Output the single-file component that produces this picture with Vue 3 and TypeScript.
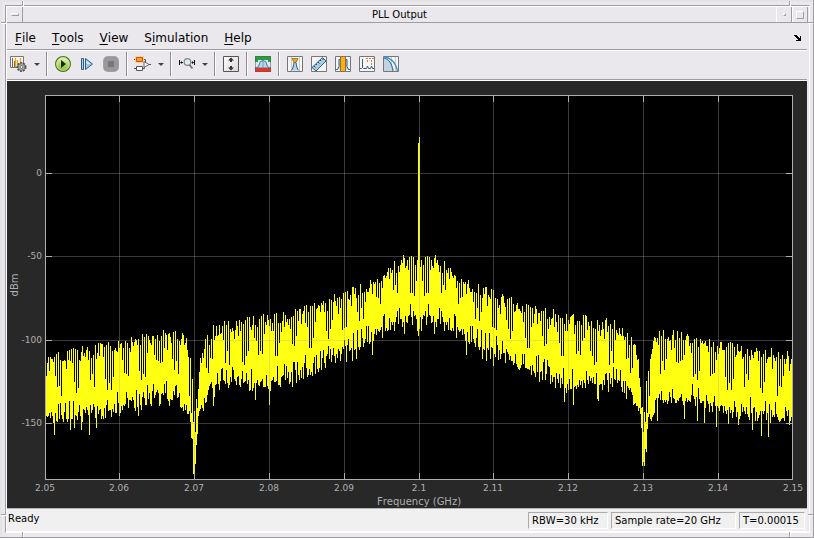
<script setup lang="ts">
interface MenuEntry { key: string; rest: string; lead?: string }
type Point = [number, number]

const menus: MenuEntry[] = [
  { key: 'F', rest: 'ile' },
  { key: 'T', rest: 'ools' },
  { key: 'V', rest: 'iew' },
  { lead: 'S', key: 'i', rest: 'mulation' },
  { key: 'H', rest: 'elp' },
]
const readouts = [
  { text: 'RBW=30 kHz', kind: 'rbw' },
  { text: 'Sample rate=20 GHz', kind: 'rate' },
  { text: 'T=0.00015', kind: 'time' },
]

// Axes rectangle inside the 800 x 427 scope canvas
const left = 38, top = 14, right = 785, bottom = 398
const xTicks = ['2.05', '2.06', '2.07', '2.08', '2.09', '2.1', '2.11', '2.12', '2.13', '2.14', '2.15']
  .map((label, i) => ({ label, x: left + Math.floor(i * 74.8) }))
const yTicks = [
  { label: '0', y: 92 }, { label: '-50', y: 175 }, { label: '-100', y: 259 }, { label: '-150', y: 342 },
]

// Envelopes as [distance from carrier, y]
const upper: Point[] = [[0, 175], [16, 173], [35, 187], [66, 205], [100, 219], [150, 231], [190, 237], [206, 243],
  [214, 257], [219, 273], [222, 308], [225, 328], [228, 282], [233, 256], [239, 247], [262, 249], [300, 259], [340, 265], [374, 270]]
const lower: Point[] = [[0, 238], [20, 241], [69, 269], [110, 289], [150, 304], [190, 303], [208, 306], [214, 319],
  [221, 336], [224, 384], [226, 374], [229, 337], [240, 318], [262, 318], [300, 328], [340, 335], [374, 338]]
const floor: Point[] = [[0, 214], [25, 219], [69, 248], [100, 268], [150, 283], [200, 287], [215, 300], [224, 356],
  [232, 325], [242, 295], [270, 300], [320, 312], [374, 320]]

function level(points: Point[], d: number): number {
  for (let i = 1; i < points.length; i++) {
    const [x0, y0] = points[i - 1]
    const [x1, y1] = points[i]
    if (d <= x1) return y0 + ((y1 - y0) * (d - x0)) / (x1 - x0)
  }
  return points[points.length - 1][1]
}
function noise(n: number): number {
  const v = Math.sin(n * 127.1 + 311.7) * 43758.5453
  return v - Math.floor(v)
}

// Nulls between spurs come in groups of alternating columns that repeat about every 17 columns
function nullDepth(d: number): number {
  const group = Math.floor((d + 1) / 16.8)
  const phase = Math.floor(d + 1 - group * 16.8)
  const r = noise(group * 20 + phase)
  if (phase === 6 || phase === 8 || phase === 10) return 0.6 + 0.4 * r
  if (phase === 4 || phase === 12) return 0.25 + 0.5 * r
  if (phase === 1 || phase === 14) return 0.5 * r
  return 0
}

function buildTrace(): string {
  let path = ''
  for (let x = left + 1; x < right; x++) {
    const d = Math.abs(x - 412)
    const n = d < 70 ? d : x
    const hi = level(upper, d)
    const inNotch = d > 212 && d < 236
    const reach = Math.max(level(floor, d) - hi, 4)
    const depth = nullDepth(d)
    let y0 = hi + noise(n + 500) * 14
    if (depth > 0) y0 = Math.max(y0, hi + reach * depth)
    let y1 = level(lower, d) - 7 + noise(n + 1300) * 14
    if (noise(n + 1700) < 0.07) y1 += 14
    if (noise(n + 2100) < 0.25 && !inNotch) y1 -= 11
    if (x === 411) { y0 = 62; y1 = 255 }
    if (x === 412) { y0 = 56; y1 = 248 }
    if (x === 187) y1 = 393
    if (x === 637) y1 = 385
    path += `M${x} ${Math.round(y0)}h1V${Math.round(Math.min(y1, 393))}h-1z`
  }
  return path
}
const trace = buildTrace()
</script>

<template>
  <div class="window">
    <i class="notch v tl"></i><i class="notch v tr"></i><i class="notch v bl"></i><i class="notch v br"></i>
    <i class="notch h lt"></i><i class="notch h rt"></i><i class="notch h lb"></i><i class="notch h rb"></i>
    <div class="frame">
      <header class="titlebar">
        <button class="wm" aria-label="Window menu"><i class="dash"></i></button>
        <h1>PLL Output</h1>
        <button class="wm" aria-label="Minimize"><i class="dot"></i></button>
        <button class="wm" aria-label="Maximize"><i class="box"></i></button>
      </header>

      <nav class="menubar">
        <button v-for="m in menus" :key="m.rest" class="menu">{{ m.lead }}<u>{{ m.key }}</u>{{ m.rest }}</button>
        <button class="dock" aria-label="Dock">
          <svg width="8" height="6" viewBox="0 0 8 6" shape-rendering="crispEdges"><path d="M0 0h3v1h1v1h1v1h1V1h1v5H2V5h2V4H3V3H2V2H1V1H0z" /></svg>
        </button>
      </nav>

      <div class="toolbar" role="toolbar">
        <button aria-label="Configuration properties">
          <svg viewBox="0 0 16 16">
            <path d="M-.5 .5h13v11h-13z" fill="#fafafa" stroke="#777" />
            <path d="M1.5 2v9M3.500 5v6" stroke="#666" /><path d="M4.500 2v9M6.500 4v7M9.500 2v8" stroke="#f5a400" stroke-width="1.300" />
            <circle cx="10.500" cy="11" r="4.200" fill="#aaa" stroke="#555" stroke-width="1.600" stroke-dasharray="2 1" />
            <circle cx="10.500" cy="11" r="3.300" fill="#bbb" stroke="#666" stroke-width=".8" /><circle cx="10.500" cy="11" r="1.500" fill="#eee" stroke="#555" stroke-width=".8" />
          </svg>
        </button>
        <button class="drop" aria-label="Configuration options"><i></i></button>
        <span class="sep"></span>
        <button aria-label="Run">
          <svg viewBox="0 0 16 16">
            <defs><linearGradient id="green" x2="0" y2="1"><stop stop-color="#e9f5c8" /><stop offset=".5" stop-color="#b6dc72" /><stop offset="1" stop-color="#83b92f" /></linearGradient></defs>
            <circle cx="8" cy="8" r="7.400" fill="url(#green)" stroke="#4c7420" stroke-width="1.200" /><circle cx="8" cy="8" r="6.300" fill="none" stroke="#d5ec9e" stroke-width=".8" />
            <path d="M6 4v8l5-4z" fill="#1c2817" />
          </svg>
        </button>
        <button aria-label="Step forward">
          <svg viewBox="0 0 16 16"><path d="M2.500 2.500h2v11h-2z" fill="#a8cde8" stroke="#315d8a" /><path d="M6.500 2.500v11L13.500 8z" fill="#9bc8e8" stroke="#315d8a" /><path d="M7.500 4.500v3.500h4z" fill="#d4eaf8" /></svg>
        </button>
        <button aria-label="Stop" disabled>
          <svg viewBox="0 0 16 16"><rect width="16" height="16" rx="5" fill="#a1a1a1" /><rect x="1" y="1" width="14" height="14" rx="4" fill="#999" /><path d="M5 5h6v6H5z" fill="#777" /></svg>
        </button>
        <span class="sep"></span>
        <button aria-label="Highlight block">
          <svg viewBox="0 0 16 16">
            <path d="M-1 3.500H10.500V7M-1 12.500H9.500V10" fill="none" stroke="#555" />
            <rect x="0" y="0" width="9" height="7" rx="1" fill="#ffcf83" /><path d="M1.500 1.500h6v4h-6z" fill="#f59a42" stroke="#c05a16" />
            <path d="M1.500 10.500h6v4h-6z" fill="#fff" stroke="#555" /><path d="M9 5.500 14 8.500 9 11.500z" fill="#fff" stroke="#666" /><path d="M14 8.500h2" stroke="#555" />
          </svg>
        </button>
        <button class="drop" aria-label="Highlight options"><i></i></button>
        <span class="sep"></span>
        <button aria-label="Zoom X">
          <svg viewBox="0 0 16 16">
            <path d="M.5 4v5M15.500 4v5M2 6.500h2M12.500 6.500h2" stroke="#111" /><path d="M3.500 4v5M1 6.500 3 5v3zM12.500 4v5M15 6.500 13 5v3z" fill="#111" />
            <circle cx="8.500" cy="6" r="3.300" fill="#dcecf4" stroke="#888" stroke-width="1.200" /><path d="m10.500 9 3 3.500" stroke="#777" stroke-width="1.800" />
          </svg>
        </button>
        <button class="drop" aria-label="Zoom options"><i></i></button>
        <span class="sep"></span>
        <button aria-label="Scale Y-axis limits">
          <svg viewBox="0 0 16 16">
            <defs><linearGradient id="sheet" x2="1" y2="1"><stop stop-color="#fff" /><stop offset="1" stop-color="#d8d8da" /></linearGradient></defs>
            <path d="M.5 .5h15v15H.500z" fill="url(#sheet)" stroke="#555" /><path d="m8 1.500 3 3H9V6H7V4.500H5zM8 14.500l3-3H9V10H7v1.500H5z" fill="#333" />
          </svg>
        </button>
        <span class="sep"></span>
        <button aria-label="Spectral mask">
          <svg viewBox="0 0 16 16"><path d="M0 0h16v16H0z" fill="#dbeaf1" /><path d="M0 12c3 0 3.500-1 5-6 1-1 1-.5 3-1.500 2 1 2 .5 3 1.500 1.500 5 2 6 5 6z" fill="#b9d5e7" stroke="#426f98" /><path d="M0 0h16v6h-3V4H3v2H0z" fill="#22a33a" /><path d="M0 12h16v4H0z" fill="#e53528" /><path d="M8 5v7" stroke="#658ca7" stroke-width=".7" /><path d="M.5 .5h15v15H.500z" fill="none" stroke="#555" stroke-opacity=".5" /></svg>
        </button>
        <span class="sep"></span>
        <button aria-label="Peak finder">
          <svg viewBox="0 0 16 16"><path class="card" d="M.5 .5h15v15H.500z" /><path d="M4.500 1v14M12.500 1v14" stroke="#ccc" /><path d="M4 14.500c2-1 2.500-5 3-8h2c.5 3 1 7 3 8" fill="#b8d1e4" stroke="#315d87" /><path d="M5 2.500h6L9 6.500H7z" fill="#e7a72a" stroke="#9b6814" stroke-width=".8" /></svg>
        </button>
        <button aria-label="Cursor measurements">
          <svg viewBox="0 0 16 16"><path class="card" d="M.5 .5h15v15H.500z" /><path d="m1 11.500 10.500-10 3.500 3.500-10 10z" fill="#abcde2" stroke="#315d87" /><path d="m3 10 1.500 1.500M5 8l1 1M7 6l1.500 1.500M9 4l1 1M11 2.500l1.500 1.500" stroke="#244866" /></svg>
        </button>
        <button aria-label="Channel measurements">
          <svg viewBox="0 0 16 16"><path class="card" d="M.5 .5h15v15H.500z" /><path d="M1 13.500h1.500l1.500-3v-7h8v7l1.500 3H15" fill="#bcd5e8" stroke="#315d87" /><path d="M6 1h4v14H6z" fill="#ffad18" /><path d="M5.500 1v14M10.500 1v14" stroke="#9b711d" /></svg>
        </button>
        <button aria-label="Distortion measurements">
          <svg viewBox="0 0 16 16"><path class="card" d="M.5 .5h15v15H.500z" /><path d="M1 12.500h1.500l1-1V3v8.500l1 1h3l1-2.500 1 2.500h2l1-2.500 1 2.500H15" fill="none" stroke="#315d87" /><path d="M7 2.500h8M12.500 4v6M8.500 4v3" fill="none" stroke="#e07940" stroke-dasharray="2 1" /></svg>
        </button>
        <button aria-label="CCDF measurements">
          <svg viewBox="0 0 16 16"><path class="card" d="M.5 .5h15v15H.500z" /><path d="M1 2c5 1 9 6 10 13H1z" fill="#bdd5e5" /><path d="M4.500 1v14M8.500 1v14M12.500 1v14" stroke="#ccc" /><path d="M1 2c5 1 8 6 9 13" fill="none" stroke="#315d87" /><path d="M1 1c8 1 12 7 13.500 14" fill="none" stroke="#3f96c9" stroke-width="1.300" /></svg>
        </button>
      </div>

      <main class="scope">
        <svg viewBox="0 0 800 427" role="img" aria-label="dBm, Frequency (GHz)">
          <g shape-rendering="crispEdges">
            <rect :x="left" :y="top" :width="right - left" :height="bottom - top" fill="#000" />
            <path :d="trace" fill="#ffff12" />
            <g class="grid">
              <path v-for="t in xTicks.slice(1, -1)" :key="t.label" :d="`M${t.x + 0.5} ${top}V${bottom}`" />
              <path v-for="t in yTicks" :key="t.label" :d="`M${left} ${t.y + 0.5}H${right}`" />
            </g>
            <g class="axis">
              <path v-for="t in xTicks.slice(1, -1)" :key="t.label" :d="`M${t.x + 0.5} ${top}v7M${t.x + 0.5} ${bottom}v-6`" />
              <path v-for="t in yTicks" :key="t.label" :d="`M${left} ${t.y + 0.5}h7M${right} ${t.y + 0.5}h-6`" />
              <rect :x="left + 0.5" :y="top + 0.5" :width="right - left" :height="bottom - top" />
            </g>
          </g>
          <g class="labels">
            <text v-for="t in xTicks" :key="t.label" :x="t.x" y="410" text-anchor="middle">{{ t.label }}</text>
            <text v-for="t in yTicks" :key="t.label" x="35" :y="t.y + 3" text-anchor="end">{{ t.label }}</text>
            <text class="name" x="412" y="424" text-anchor="middle">Frequency (GHz)</text>
            <text class="name" transform="translate(11 204) rotate(-90)" text-anchor="middle">dBm</text>
          </g>
        </svg>
      </main>

      <footer class="status">
        <span class="ready">Ready</span>
        <span v-for="r in readouts" :key="r.kind" class="cell" :class="r.kind">{{ r.text }}</span>
      </footer>
    </div>
  </div>
</template>

<style>
body { margin: 0; background: #eae8ed; }
</style>

<style scoped>
.window {
  position: relative;
  box-sizing: border-box;
  padding: 5px 3px 4px 5px;
  border-right: 1px solid #9f9da3;
  border-bottom: 1px solid #9f9da3;
  background: #eae8ed;
  box-shadow: inset 2px 2px #e5e3e4;
  font: 10px "DejaVu Sans", sans-serif;
  font-kerning: none;
  color: #000;
}
.frame {
  border: 1px solid #9f9da3;
  border-right-color: #fff;
  border-bottom-color: #fff;
  box-shadow: inset 1px 1px #fff;
  padding: 1px 2px 0 1px;
}
button { margin: 0; padding: 0; border: 0; background: none; font: inherit; font-kerning: none; color: inherit; }
svg { display: block; }

.notch { position: absolute; }
.v { width: 1px; height: 5px; background: #9f9da3; border-right: 1px solid #fff; }
.h { width: 5px; height: 1px; background: #9f9da3; border-bottom: 1px solid #fff; }
.tl { left: 22px; top: 1px; }
.tr { right: 22px; top: 1px; }
.bl { left: 22px; bottom: 0; }
.br { right: 22px; bottom: 0; }
.lt { left: 1px; top: 22px; }
.rt { right: 0; top: 22px; }
.lb { left: 1px; bottom: 21px; }
.rb { right: 0; bottom: 21px; }

.titlebar { display: flex; height: 15px; margin-right: -1px; border-bottom: 1px solid #9f9da3; }
.titlebar h1 { flex: 1; margin: 0; font-size: 10px; font-weight: 400; line-height: 15px; text-align: center; }
.wm { display: flex; align-items: center; justify-content: center; width: 16px; border-left: 1px solid #fff; border-right: 1px solid #9f9da3; box-sizing: border-box; }
.wm:first-child { border-left: 0; }
.wm i { box-sizing: border-box; border: 1px solid; border-color: #fff #9f9da3 #9f9da3 #fff; }
.dash { width: 8px; height: 3px; }
.dot { width: 3px; height: 3px; }
.box { width: 8px; height: 8px; }

.menubar { display: flex; align-items: center; gap: 16px; box-sizing: border-box; height: 27px; padding: 3px 5px 0 8px; border-bottom: 1px solid #9f9da3; box-shadow: 0 1px #fff; font-size: 12px; }
.menu { height: 22px; line-height: 22px; }
.menu u { text-underline-offset: 2px; text-decoration-thickness: 1px; }
.dock { margin-left: auto; }

.toolbar { display: flex; align-items: flex-start; box-sizing: border-box; height: 29px; margin-top: 1px; padding-top: 1px; border-bottom: 1px solid #9f9da3; }
.toolbar button { padding: 0 4px; height: 24px; }
.toolbar svg { width: 16px; height: 16px; overflow: visible; }
.toolbar .drop { display: flex; align-items: center; width: 12px; padding: 0 3px; }
.drop i { border: 3px solid transparent; border-top-color: #444; border-bottom: 0; }
.sep { width: 1px; height: 24px; margin: 0 3px; background: #8e8c92; border-right: 1px solid #fff; }
.card { fill: #f5f5f6; stroke: #777; }

.scope { border-top: 1px solid #fff; background: #282828; }
.scope svg { width: 100%; height: auto; }
.grid path { stroke: #aaa; stroke-opacity: 0.34; }
.axis path, .axis rect { fill: none; stroke: #afafaf; }
.labels { fill: #afafaf; font-size: 9px; }
.name { font-size: 10px; }

.status { display: flex; align-items: flex-start; gap: 3px; box-sizing: border-box; height: 24px; padding: 3px 2px 0 1px; border-top: 1px solid #b5b3b6; border-bottom: 1px solid #fff; background: #f0f0f0; }
.ready { flex: 1; line-height: 14px; }
.cell { box-sizing: border-box; height: 17px; padding-left: 3px; border: 1px solid; border-color: #aaa #fff #fff #aaa; line-height: 15px; white-space: nowrap; }
.rbw { width: 80px; }
.rate { width: 125px; }
.time { width: 66px; }
</style>
